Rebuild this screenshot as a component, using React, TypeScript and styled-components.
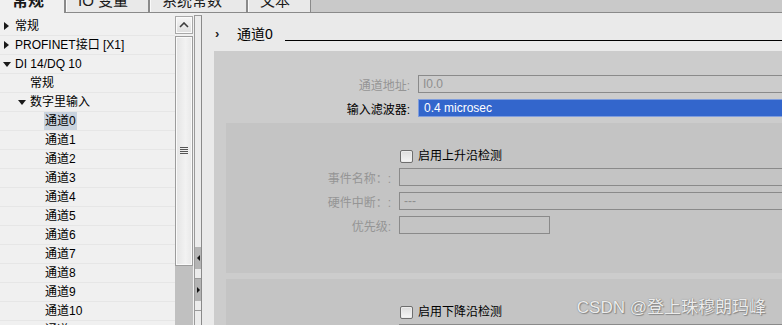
import React, { FC } from 'react';
import styled, { createGlobalStyle, css } from 'styled-components';

const GlobalStyle = createGlobalStyle`
  html, body {
    margin: 0;
    padding: 0;
    overflow: hidden;
    background: #f0f0f0;
  }
  * {
    box-sizing: border-box;
  }
`;

const FONT = `'Liberation Sans', 'Noto Sans CJK SC', sans-serif`;

type TreeItem = { label: string; level: number; caret?: 'right' | 'down'; selected?: boolean };

const treeItems: TreeItem[] = [
  { label: '常规', level: 0, caret: 'right' },
  { label: 'PROFINET接口 [X1]', level: 0, caret: 'right' },
  { label: 'DI 14/DQ 10', level: 0, caret: 'down' },
  { label: '常规', level: 1 },
  { label: '数字里输入', level: 1, caret: 'down' },
  ...Array.from({ length: 12 }, (_, i) => ({ label: `通道${i}`, level: 2, selected: i === 0 })),
];

const tabs = [
  { label: '常规', width: 65, active: true },
  { label: 'IO 变量', width: 84 },
  { label: '系统常数', width: 98 },
  { label: '文本', width: 64 },
];

export default function App() {
  return (
    <>
      <GlobalStyle />
      <Page>
        <TabBar>
          {tabs.map((t) => (
            <Tab key={t.label} $active={!!t.active} $width={t.width}>
              <span>{t.label}</span>
            </Tab>
          ))}
          <TabFill />
        </TabBar>

        <Body>
          <Tree>
            {treeItems.map((item, i) => (
              <TreeRow key={i} $level={item.level}>
                <CaretSlot>{item.caret && <Caret $dir={item.caret} />}</CaretSlot>
                <RowLabel $selected={!!item.selected}>{item.label}</RowLabel>
              </TreeRow>
            ))}
          </Tree>

          <VScroll>
            <ScrollUp>
              <svg width="10" height="6" viewBox="0 0 10 6">
                <path d="M1 5 L5 1 L9 5" fill="none" stroke="#3c3c3c" strokeWidth="1.6" />
              </svg>
            </ScrollUp>
            <Thumb>
              <Grip />
            </Thumb>
            <Track />
          </VScroll>

          <Splitter>
            <SplitSpace />
            <SplitHandle $dir="left" />
            <SplitGap />
            <SplitHandle $dir="right" />
            <SplitGap />
          </Splitter>

          <Editor>
            <Heading>
              <Chevron>›</Chevron>
              <HeadingTitle>通道0</HeadingTitle>
              <HeadingRule />
            </Heading>

            <Content>
              <FormGrid $labelWidth={196}>
                <FieldLabel $disabled>通道地址:</FieldLabel>
                <Field $disabled>I0.0</Field>
                <FieldLabel>输入滤波器:</FieldLabel>
                <SelectField>0.4 microsec</SelectField>
              </FormGrid>

              <SubPanel>
                <FormGrid $labelWidth={165}>
                  <span />
                  <CheckRow>
                    <CheckBox />
                    <CheckText>启用上升沿检测</CheckText>
                  </CheckRow>
                  <FieldLabel $disabled>事件名称：:</FieldLabel>
                  <Field $disabled />
                  <FieldLabel $disabled>硬件中断：:</FieldLabel>
                  <Field $disabled>---</Field>
                  <FieldLabel $disabled>优先级:</FieldLabel>
                  <Field $disabled $width={151} />
                </FormGrid>
              </SubPanel>

              <SubPanel>
                <FormGrid $labelWidth={165}>
                  <span />
                  <CheckRow>
                    <CheckBox />
                    <CheckText>启用下降沿检测</CheckText>
                  </CheckRow>
                  <FieldLabel $disabled>事件名称：:</FieldLabel>
                  <Field $disabled />
                </FormGrid>
              </SubPanel>
            </Content>
          </Editor>
        </Body>

        <Watermark>CSDN @登上珠穆朗玛峰</Watermark>
      </Page>
    </>
  );
}

const Page = styled.div`
  position: relative;
  width: 782px;
  height: 325px;
  display: flex;
  flex-direction: column;
  overflow: hidden;
  font-family: ${FONT};
  font-size: 12px;
  color: #000;
  background: #f0f0f0;
`;

const TabBar = styled.div`
  display: flex;
  height: 13px;
  flex-shrink: 0;
`;

const Tab = styled.div<{ $active: boolean; $width: number }>`
  width: ${(p) => p.$width}px;
  overflow: hidden;
  padding-left: 12px;
  font-size: 15px;
  line-height: 15px;
  color: #1a1a1a;

  span {
    display: block;
    margin-top: -7px;
  }

  ${(p) =>
    p.$active
      ? css`
          background: #f0f0f0;
          font-weight: bold;
          font-size: 16px;
          border-right: 1px solid #8a8a8a;
        `
      : css`
          background: #e9e9e9;
          border-left: 1px solid #8a8a8a;
          border-right: 1px solid #8a8a8a;
          border-bottom: 1px solid #8a8a8a;
          box-shadow: inset 1px 0 #fafafa;
        `}
`;

const TabFill = styled.div`
  flex: 1;
  background: #c9c9c9;
  border-bottom: 1px solid #8a8a8a;
`;

const Body = styled.div`
  flex: 1;
  min-height: 0;
  display: flex;
`;

const Tree = styled.div`
  width: 175px;
  flex-shrink: 0;
  padding-top: 4px;
  background: #f0f0f0;
  overflow: hidden;
`;

const TreeRow = styled.div<{ $level: number }>`
  height: 19px;
  display: flex;
  align-items: center;
  padding-left: ${(p) => 4 + p.$level * 15}px;
  border-bottom: 1px solid #e6e6e6;
  white-space: nowrap;
`;

const CaretSlot = styled.span`
  width: 11px;
  flex-shrink: 0;
  display: flex;
  align-items: center;
`;

const Caret = styled.span<{ $dir: 'right' | 'down' }>`
  width: 0;
  height: 0;
  ${(p) =>
    p.$dir === 'right'
      ? css`
          border-top: 4px solid transparent;
          border-bottom: 4px solid transparent;
          border-left: 5px solid #1a1a1a;
        `
      : css`
          margin-left: -1px;
          border-left: 4px solid transparent;
          border-right: 4px solid transparent;
          border-top: 5px solid #1a1a1a;
        `}
`;

const RowLabel = styled.span<{ $selected: boolean }>`
  line-height: 18px;
  padding: 0 1px;
  margin-left: -1px;
  background: ${(p) => (p.$selected ? '#c9d3de' : 'transparent')};
`;

const VScroll = styled.div`
  width: 19px;
  flex-shrink: 0;
  display: flex;
  flex-direction: column;
  padding-top: 3px;
  background: #f0f0f0;
`;

const ScrollUp = styled.div`
  width: 18px;
  height: 18px;
  display: flex;
  align-items: center;
  justify-content: center;
  border: 1px solid #a8a8a8;
  box-shadow: inset 0 0 0 1px #fbfbfb;
  background: linear-gradient(#f6f6f6, #dedede);
`;

const Thumb = styled.div`
  width: 18px;
  height: 230px;
  margin-top: 2px;
  display: flex;
  align-items: center;
  justify-content: center;
  border: 1px solid #9c9c9c;
  box-shadow: inset 0 0 0 1px #fafafa;
  background: linear-gradient(90deg, #e4e4e4, #f2f2f2 60%, #e8e8e8);
`;

const Grip = styled.span`
  width: 8px;
  height: 7px;
  margin-top: -1px;
  background: repeating-linear-gradient(#555 0 1px, transparent 1px 2px);
`;

const Track = styled.div`
  width: 18px;
  flex: 1;
  background: #c0c0c0;
`;

const Splitter = styled.div`
  width: 8px;
  flex-shrink: 0;
  margin-top: 2px;
  display: flex;
  flex-direction: column;
  border-left: 1px solid #9a9a9a;
  border-right: 1px solid #8a8a8a;
  border-top: 1px solid #9a9a9a;
  background: #ececec;
`;

const SplitSpace = styled.div`
  height: 231px;
`;

const SplitGap = styled.div`
  height: 10px;
  border-bottom: 1px solid #9a9a9a;
`;

const SplitHandle = styled.div<{ $dir: 'left' | 'right' }>`
  height: 22px;
  display: flex;
  align-items: center;
  justify-content: center;
  background: #b4b4b4;

  &::after {
    content: '';
    width: 0;
    height: 0;
    border-top: 3px solid transparent;
    border-bottom: 3px solid transparent;
    ${(p) => (p.$dir === 'left' ? 'border-right: 3px solid #111;' : 'border-left: 3px solid #111;')}
  }
`;

const Editor = styled.div`
  flex: 1;
  min-width: 0;
  display: flex;
  flex-direction: column;
  background: #eaeaea;
  overflow: hidden;
`;

const Heading = styled.div`
  height: 38px;
  flex-shrink: 0;
  display: flex;
  align-items: flex-end;
  padding: 0 0 9px 13px;
`;

const Chevron = styled.span`
  width: 22px;
  font-size: 13px;
  font-weight: bold;
  line-height: 16px;
  color: #222;
`;

const HeadingTitle = styled.span`
  font-size: 14px;
  line-height: 16px;
  margin-right: 12px;
`;

const HeadingRule = styled.span`
  flex: 1;
  height: 1px;
  margin-bottom: 1px;
  background: #000;
`;

const Content = styled.div`
  flex: 1;
  margin-left: 12px;
  padding-top: 24px;
  display: flex;
  flex-direction: column;
  gap: 6px;
  background: #cccccc;
  overflow: hidden;
`;

const FormGrid = styled.div<{ $labelWidth: number }>`
  display: grid;
  grid-template-columns: ${(p) => p.$labelWidth}px 1fr;
  column-gap: 8px;
  row-gap: 6px;
  align-items: center;
  margin-right: -20px;
`;

const FieldLabel = styled.span<{ $disabled?: boolean }>`
  text-align: right;
  white-space: nowrap;
  color: ${(p) => (p.$disabled ? '#959595' : '#000')};
`;

const Field = styled.div<{ $disabled?: boolean; $width?: number }>`
  height: 18px;
  width: ${(p) => (p.$width ? `${p.$width}px` : 'auto')};
  padding: 0 4px;
  line-height: 16px;
  border: 1px solid #8a8a8a;
  color: ${(p) => (p.$disabled ? '#8e8e8e' : '#000')};
`;

const SelectField = styled.div`
  height: 18px;
  padding: 0 5px;
  line-height: 16px;
  color: #fff;
  background: #3366cc;
  border: 1px solid #7f9ddd;
`;

const SubPanel = styled.div`
  margin-left: 12px;
  height: 150px;
  flex-shrink: 0;
  padding-top: 27px;
  background: #c4c4c4;
`;

const CheckRow = styled.div`
  height: 13px;
  display: flex;
  align-items: center;
  gap: 5px;
  margin-left: 1px;
  margin-bottom: -1px;
`;

const CheckBox = styled.span`
  width: 13px;
  height: 13px;
  border: 1px solid #6e6e6e;
  border-radius: 2px;
  background: linear-gradient(#dcdcdc, #f6f6f6);
  box-shadow: inset 0 0 0 1px #ececec;
`;

const CheckText = styled.span`
  line-height: 13px;
  color: #000;
`;

const Watermark = styled.div`
  position: absolute;
  right: 16px;
  bottom: 7px;
  font-family: ${FONT};
  font-size: 17px;
  color: #ececec;
  text-shadow: 0 0 1px #6a6a6a, 1px 1px 1px #8a8a8a;
  pointer-events: none;
`;
